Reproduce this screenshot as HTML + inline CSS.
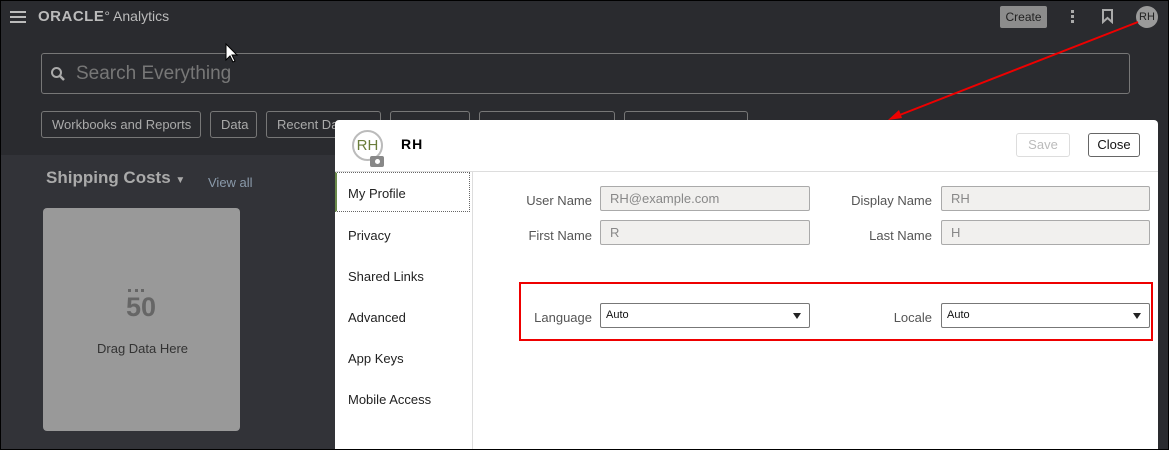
<!DOCTYPE html>
<html><head><style>
*{box-sizing:border-box;margin:0;padding:0}
body{width:1169px;height:450px;overflow:hidden;background:#2a2b2f;font-family:"Liberation Sans",sans-serif;position:relative}
.a{position:absolute}
.chip{position:absolute;top:111px;height:27px;border:1px solid #777;border-radius:3px;color:#aaa;font-size:13px;line-height:25px;padding-left:10px}
.lab{position:absolute;font-size:13px;color:#555;text-align:right}
.inp{position:absolute;height:25px;border:1px solid #aaa;background:#f1f0ee;border-radius:2px;color:#888;font-size:13px;line-height:23px;padding-left:9px}
.sel{position:absolute;height:25px;border:1px solid #777;background:#fff;border-radius:2px;color:#111;font-size:11px;line-height:23px;padding-left:5px}
.sel:after{content:"";position:absolute;right:8px;top:9px;border-left:4px solid transparent;border-right:4px solid transparent;border-top:6px solid #222}
.nav{position:absolute;left:13px;font-size:13px;color:#222}
</style></head><body>
<div class="a" style="left:0;top:155px;width:335px;height:295px;background:#323338"></div>
<div class="a" style="left:10px;top:11px;width:16px;height:2px;background:#bbb;box-shadow:0 5px 0 #bbb,0 10px 0 #bbb"></div>
<div class="a" style="left:38px;top:8px;color:#bbb;font-size:15px;font-weight:bold;letter-spacing:0.5px">ORACLE<span style="font-weight:normal;font-size:14px;letter-spacing:0">° Analytics</span></div>
<div class="a" style="left:1000px;top:6px;width:47px;height:22px;background:#8c8c8c;color:#222;font-size:12px;line-height:22px;text-align:center;border-radius:2px">Create</div>
<div class="a" style="left:1071px;top:10px;width:3px;height:3px;background:#aaa;box-shadow:0 5px 0 #aaa,0 10px 0 #aaa"></div>
<svg class="a" style="left:1102px;top:9px" width="12" height="15"><path d="M1 1 H10 V13 L5.5 9 L1 13 Z" fill="none" stroke="#aaa" stroke-width="2"/></svg>
<div class="a" style="left:1136px;top:6px;width:22px;height:22px;border-radius:50%;background:#9a9a9a;color:#222;font-size:11px;line-height:22px;text-align:center">RH</div>
<div class="a" style="left:41px;top:53px;width:1089px;height:41px;border:1px solid #777;border-radius:3px"></div>
<svg class="a" style="left:50px;top:66px" width="16" height="16"><circle cx="6.5" cy="6.5" r="4.5" fill="none" stroke="#aaa" stroke-width="2"/><line x1="10" y1="10" x2="14" y2="14" stroke="#aaa" stroke-width="2.5"/></svg>
<div class="a" style="left:76px;top:63px;color:#777;font-size:19px">Search Everything</div>
<div class="chip" style="left:41px;width:160px">Workbooks and Reports</div>
<div class="chip" style="left:210px;width:47px">Data</div>
<div class="chip" style="left:266px;width:115px">Recent Data</div>
<div class="chip" style="left:390px;width:80px"></div>
<div class="chip" style="left:479px;width:136px"></div>
<div class="chip" style="left:624px;width:124px"></div>
<div class="a" style="left:46px;top:168px;color:#aaa;font-size:17px;font-weight:bold">Shipping Costs <span style="font-size:10px">▼</span></div>
<div class="a" style="left:208px;top:175px;color:#8a9aaa;font-size:13px">View all</div>
<div class="a" style="left:43px;top:208px;width:197px;height:223px;background:#999;border-radius:4px"></div>
<div class="a" style="left:128px;top:289px;width:16px;height:3px;border-top:3px dotted #666"></div>
<div class="a" style="left:126px;top:292px;color:#666;font-size:27px;font-weight:bold">50</div>
<div class="a" style="left:97px;top:341px;color:#333;font-size:13px">Drag Data Here</div>
<div class="a" style="left:335px;top:120px;width:823px;height:330px;background:#fff;border-radius:4px 4px 0 0">
 <div class="a" style="left:17px;top:10px;width:31px;height:31px;border:2px solid #bbb;border-radius:50%;color:#6a7d3a;font-size:15px;line-height:27px;text-align:center">RH</div>
 <div class="a" style="left:35px;top:36px;width:14px;height:11px;background:#888;border-radius:2px"></div>
 <div class="a" style="left:40px;top:39px;width:5px;height:5px;border-radius:50%;background:#fff"></div>
 <div class="a" style="left:66px;top:16px;font-size:14px;font-weight:bold;letter-spacing:1px">RH</div>
 <div class="a" style="left:681px;top:13px;width:54px;height:24px;border:1px solid #ddd;border-radius:3px;color:#bbb;font-size:13px;line-height:22px;text-align:center">Save</div>
 <div class="a" style="left:753px;top:13px;width:52px;height:24px;border:1px solid #666;border-radius:3px;color:#111;font-size:13px;line-height:22px;text-align:center">Close</div>
 <div class="a" style="left:0;top:51px;width:823px;height:1px;background:#ddd"></div>
 <div class="a" style="left:137px;top:51px;width:1px;height:279px;background:#ddd"></div>
 <div class="a" style="left:0;top:52px;width:135px;height:40px;border:1px dotted #666;border-left:2px solid #6a8a4a"></div>
 <div class="nav" style="top:66px">My Profile</div>
 <div class="nav" style="top:108px">Privacy</div>
 <div class="nav" style="top:149px">Shared Links</div>
 <div class="nav" style="top:190px">Advanced</div>
 <div class="nav" style="top:231px">App Keys</div>
 <div class="nav" style="top:272px">Mobile Access</div>
 <div class="lab" style="left:170px;top:73px;width:87px">User Name</div>
 <div class="lab" style="left:170px;top:108px;width:87px">First Name</div>
 <div class="inp" style="left:265px;top:66px;width:210px">RH@example.com</div>
 <div class="inp" style="left:265px;top:100px;width:210px">R</div>
 <div class="lab" style="left:500px;top:73px;width:97px">Display Name</div>
 <div class="lab" style="left:500px;top:108px;width:97px">Last Name</div>
 <div class="inp" style="left:606px;top:66px;width:209px">RH</div>
 <div class="inp" style="left:606px;top:100px;width:209px">H</div>
 <div class="a" style="left:184px;top:162px;width:634px;height:59px;border:2px solid #e00"></div>
 <div class="lab" style="left:190px;top:190px;width:67px">Language</div>
 <div class="sel" style="left:265px;top:183px;width:210px">Auto</div>
 <div class="lab" style="left:540px;top:190px;width:57px">Locale</div>
 <div class="sel" style="left:606px;top:183px;width:209px">Auto</div>
</div>
<svg class="a" style="left:0;top:0" width="1169" height="450"><line x1="1138" y1="22" x2="892" y2="118" stroke="#e00" stroke-width="2"/><path d="M888 120 L899 110 L902 118 Z" fill="#e00"/><path d="M226 44 L226 60 L230 56 L233 62 L235 61 L232 55 L237 55 Z" fill="#fff" stroke="#000" stroke-width="1"/><rect x="0.5" y="0.5" width="1168" height="449" fill="none" stroke="#000"/></svg>
</body></html>
